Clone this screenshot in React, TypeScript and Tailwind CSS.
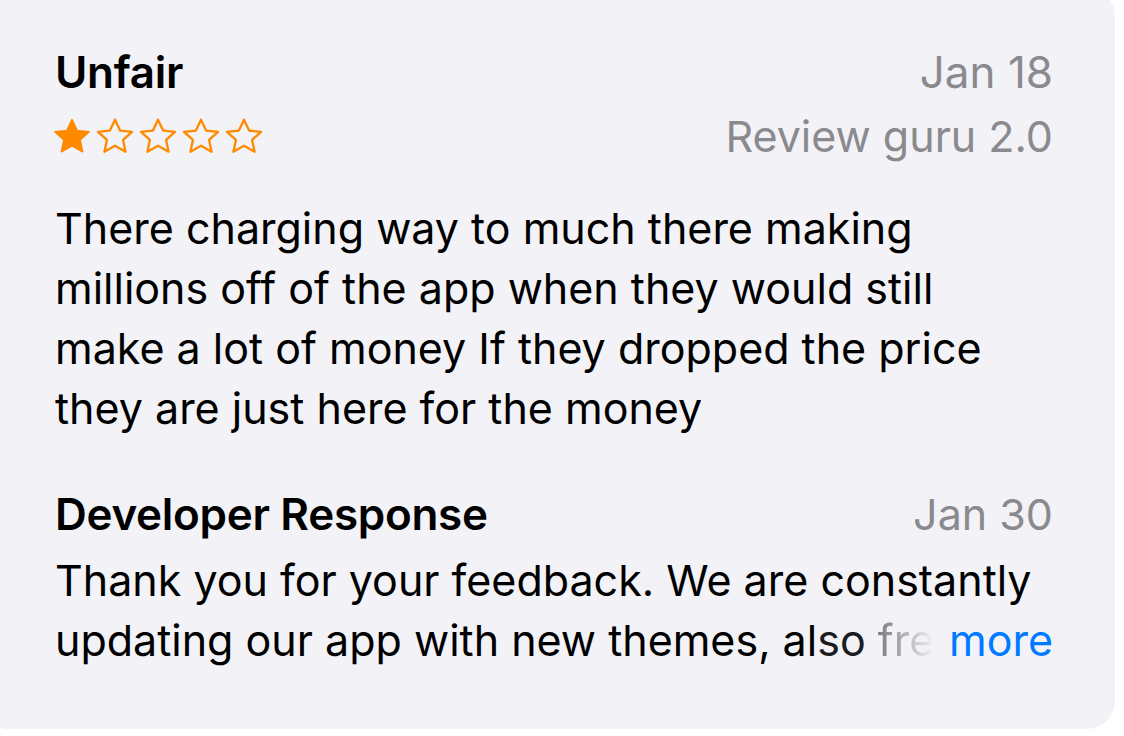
import React from 'react';

const Star: React.FC<{ filled?: boolean }> = ({ filled }) => (
  <svg width="40" height="38" viewBox="0 0 24 23" className="shrink-0">
    <path
      d="M12 1.6l3.1 6.6 7.2.8-5.4 4.9 1.5 7.1L12 17.4 5.6 21l1.5-7.1L1.7 9l7.2-.8z"
      fill={filled ? '#ff8a00' : 'none'}
      stroke="#ff8a00"
      strokeWidth={filled ? 1 : 1.4}
      strokeLinejoin="round"
    />
  </svg>
);

const reviewLines = [
  'There charging way to much there making',
  'millions off of the app when they would still',
  'make a lot of money If they dropped the price',
  'they are just here for the money',
];

const App: React.FC = () => {
  const rating = 1;

  return (
    <div className="w-full h-[736px] bg-white overflow-hidden" style={{ fontFamily: 'Inter, "Noto Sans", sans-serif' }}>
      <div className="-ml-[20px] -mt-[12px] w-[1135px] h-[741px] rounded-[28px] bg-[#f2f2f7] pl-[75px] pr-[62px] pt-[59px]">
        {/* title + date */}
        <div className="flex items-center justify-between h-[50px]">
          <span className="text-[44px] font-semibold text-black tracking-[-0.3px]">Unfair</span>
          <span className="text-[44px] text-[#8a8a8e]">Jan 18</span>
        </div>

        {/* stars + author */}
        <div className="flex items-center justify-between h-[50px] mt-[14px]">
          <div className="flex items-center gap-[3px] -ml-[3px]">
            {[1, 2, 3, 4, 5].map((i) => (
              <Star key={i} filled={i <= rating} />
            ))}
          </div>
          <span className="text-[43px] text-[#8a8a8e]">Review guru 2.0</span>
        </div>

        {/* review body */}
        <div className="mt-[37px] text-[43px] leading-[60px] text-black">
          {reviewLines.map((l) => (
            <div key={l} className="whitespace-nowrap">{l}</div>
          ))}
        </div>

        {/* developer response */}
        <div className="flex items-center justify-between h-[50px] mt-[51px]">
          <span className="text-[44px] font-semibold text-black tracking-[-0.3px]">Developer Response</span>
          <span className="text-[43px] text-[#8a8a8e]">Jan 30</span>
        </div>
        <div className="mt-[11px] text-[43px] leading-[60px] text-black">
          <div className="whitespace-nowrap">Thank you for your feedback. We are constantly</div>
          <div className="flex justify-between whitespace-nowrap">
            <span>
              updating our app with new themes, al<span className="text-[#1c1c1e]">so </span>
              <span className="bg-gradient-to-r from-[#7d7d80] to-[#f2f2f7] bg-clip-text text-transparent">fre</span>
            </span>
            <span className="text-[#007aff]">more</span>
          </div>
        </div>
      </div>
    </div>
  );
};

export default App;
